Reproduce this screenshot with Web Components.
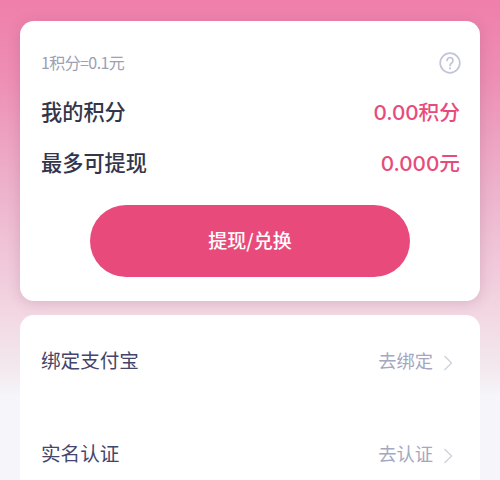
<!DOCTYPE html>
<html>
<head>
<meta charset="utf-8">
<style>
html,body{margin:0;padding:0;height:480px;overflow:hidden;}
body{background:#f5f5fa;font-family:"Noto Sans CJK SC","Noto Sans",sans-serif;}
</style>
</head>
<body>
<wallet-page>
  <points-card rate="1积分=0.1元">
    <stat-row label="我的积分" value="0.00积分"></stat-row>
    <stat-row label="最多可提现" value="0.000元"></stat-row>
    <action-button>提现/兑换</action-button>
  </points-card>
  <settings-card>
    <link-row label="绑定支付宝" action="去绑定"></link-row>
    <link-row label="实名认证" action="去认证"></link-row>
  </settings-card>
</wallet-page>
<script>
class WalletPage extends HTMLElement{
  constructor(){
    super();
    this.attachShadow({mode:"open"});
    this.shadowRoot.innerHTML=`
    <style>
    :host{display:flex;flex-direction:column;gap:14px;box-sizing:border-box;height:480px;padding:21px 20px 0;
      overflow:hidden;
      background:linear-gradient(180deg,#ef7fab 0,#ee8fb5 80px,#edb3cc 190px,#f2d3e0 300px,#f3e9ef 370px,#f5f5fa 396px);}
    </style>
    <slot></slot>`;
  }
}
class PointsCard extends HTMLElement{
  constructor(){
    super();
    this.attachShadow({mode:"open"});
    this.shadowRoot.innerHTML=`
    <style>
    :host{display:flex;flex-direction:column;flex:none;box-sizing:border-box;height:280px;padding:30px 19px 0 21px;
      background:#fff;border-radius:14px;box-shadow:0 2px 14px rgba(120,60,90,.2);}
    .top{display:flex;justify-content:space-between;align-items:center;height:24px;margin-bottom:10px;}
    .rate{font-size:16px;color:#9d9fb3;letter-spacing:-.6px;padding-bottom:2px;}
    svg{display:block;}
    </style>
    <div class="top"><span class="rate"></span>
      <svg width="22" height="22" viewBox="0 0 22 22" fill="none">
        <circle cx="11" cy="11" r="9.8" stroke="#c2c4d8" stroke-width="1.7"/>
        <path d="M8 8.6a3 3 0 1 1 4.7 2.4c-1.1.8-1.7 1.3-1.7 2.6" stroke="#c2c4d8" stroke-width="1.7" stroke-linecap="round"/>
        <circle cx="11" cy="16.3" r="1.1" fill="#c2c4d8"/>
      </svg>
    </div>
    <slot></slot>`;
    this.shadowRoot.querySelector('.rate').textContent=this.getAttribute('rate');
  }
}
class StatRow extends HTMLElement{
  constructor(){
    super();
    this.attachShadow({mode:"open"});
    this.shadowRoot.innerHTML=`
    <style>
    :host{display:flex;justify-content:space-between;align-items:center;height:51px;}
    .l{font-size:21.2px;font-weight:500;color:#33364a;}
    .v{font-size:20.7px;font-weight:500;color:#e94a7c;padding-right:1px;font-family:"Inter","Noto Sans CJK SC",sans-serif;}
    </style>
    <span class="l"></span><span class="v"></span>`;
    this.shadowRoot.querySelector('.l').textContent=this.getAttribute('label');
    this.shadowRoot.querySelector('.v').textContent=this.getAttribute('value');
  }
}
class ActionButton extends HTMLElement{
  constructor(){
    super();
    this.attachShadow({mode:"open"});
    this.shadowRoot.innerHTML=`
    <style>
    :host{display:flex;align-items:center;justify-content:center;box-sizing:border-box;width:320px;height:72px;margin:18px 0 0 49px;
      padding-bottom:4px;
      background:#e94a7c;border-radius:36px;color:#fff;font-size:19px;font-weight:500;}
    </style>
    <slot></slot>`;
  }
}
class SettingsCard extends HTMLElement{
  constructor(){
    super();
    this.attachShadow({mode:"open"});
    this.shadowRoot.innerHTML=`
    <style>
    :host{display:flex;flex-direction:column;flex:none;box-sizing:border-box;height:200px;padding:0 20px 0 21px;
      background:#fff;border-radius:14px;}
    </style>
    <slot></slot>`;
  }
}
class LinkRow extends HTMLElement{
  constructor(){
    super();
    this.attachShadow({mode:"open"});
    this.shadowRoot.innerHTML=`
    <style>
    :host{display:flex;align-items:center;justify-content:space-between;box-sizing:border-box;height:93px;padding-bottom:4px;}
    .l{font-size:19.6px;color:#43456a;}
    .r{display:flex;align-items:center;gap:10px;padding-right:7px;}
    .a{font-size:18.3px;color:#a5a7c0;}
    svg{display:block;margin-top:7px;}
    </style>
    <span class="l"></span>
    <span class="r"><span class="a"></span>
      <svg width="10" height="16" viewBox="0 0 10 16" fill="none"><path d="M1.5 1l7 7-7 7" stroke="#cfd0dc" stroke-width="1.3"/></svg>
    </span>`;
    this.shadowRoot.querySelector('.l').textContent=this.getAttribute('label');
    this.shadowRoot.querySelector('.a').textContent=this.getAttribute('action');
  }
}
customElements.define('wallet-page',WalletPage);
customElements.define('points-card',PointsCard);
customElements.define('stat-row',StatRow);
customElements.define('action-button',ActionButton);
customElements.define('settings-card',SettingsCard);
customElements.define('link-row',LinkRow);
</script>
</body>
</html>
